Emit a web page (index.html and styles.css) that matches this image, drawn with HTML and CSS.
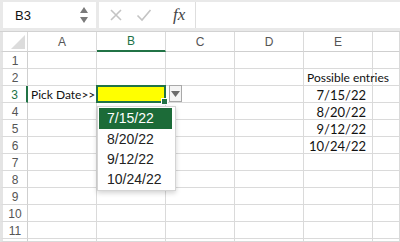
FILE: index.html
```html
<!DOCTYPE html>
<html lang="en">
<head>
    <meta charset="UTF-8">
    <meta name="viewport" content="width=device-width, initial-scale=1.0">
    <title>Pick Date</title>
    <link rel="stylesheet" href="styles.css">
</head>
<body>

    <div class="toolbar">
        <div class="namebox">
            <span class="name">B3</span>
            <svg class="spin" width="10" height="20" viewBox="0 0 10 20">
                <path d="M1 8 L5 2 L9 8 Z" fill="#7a7a7a"/>
                <path d="M1 12 L5 18 L9 12 Z" fill="#7a7a7a"/>
            </svg>
        </div>
        <div class="fx-area">
            <svg class="tool-icon" width="14" height="14" viewBox="0 0 14 14">
                <path d="M2 2 L12 12 M12 2 L2 12" stroke="#c4c4c4" stroke-width="1.6" fill="none"/>
            </svg>
            <svg class="tool-icon" width="16" height="14" viewBox="0 0 16 14">
                <path d="M1.5 7.5 L6 12 L14.5 2" stroke="#c4c4c4" stroke-width="1.6" fill="none"/>
            </svg>
            <span class="fx">fx</span>
        </div>
        <div class="formula"></div>
    </div>

    <div class="sheet">
        <!-- header row -->
        <div class="corner"><svg width="14" height="14" viewBox="0 0 14 14"><path d="M14 0 L14 14 L0 14 Z" fill="#dcdcdc"/></svg></div>
        <div class="colhead">A</div>
        <div class="colhead active">B</div>
        <div class="colhead">C</div>
        <div class="colhead">D</div>
        <div class="colhead">E</div>
        <div class="colhead"></div>

        <div class="rowhead">1</div>
        <div class="cell"></div><div class="cell"></div><div class="cell"></div><div class="cell"></div><div class="cell"></div><div class="cell"></div>

        <div class="rowhead">2</div>
        <div class="cell"></div><div class="cell"></div><div class="cell"></div><div class="cell"></div><div class="cell text">Possible entries</div><div class="cell"></div>

        <div class="rowhead active">3</div>
        <div class="cell text">Pick Date&gt;&gt;</div>
        <div class="cell selected">
            <span class="fill-handle"></span>
            <span class="drop-btn">
                <svg width="9" height="6" viewBox="0 0 9 6"><path d="M0 0 L9 0 L4.5 6 Z" fill="#6b6b6b"/></svg>
            </span>
            <ul class="drop-list">
                <li class="picked">7/15/22</li>
                <li>8/20/22</li>
                <li>9/12/22</li>
                <li>10/24/22</li>
            </ul>
        </div>
        <div class="cell"></div><div class="cell"></div><div class="cell num">7/15/22</div><div class="cell"></div>

        <div class="rowhead">4</div>
        <div class="cell"></div><div class="cell"></div><div class="cell"></div><div class="cell"></div><div class="cell num">8/20/22</div><div class="cell"></div>

        <div class="rowhead">5</div>
        <div class="cell"></div><div class="cell"></div><div class="cell"></div><div class="cell"></div><div class="cell num">9/12/22</div><div class="cell"></div>

        <div class="rowhead">6</div>
        <div class="cell"></div><div class="cell"></div><div class="cell"></div><div class="cell"></div><div class="cell num">10/24/22</div><div class="cell"></div>

        <div class="rowhead">7</div>
        <div class="cell"></div><div class="cell"></div><div class="cell"></div><div class="cell"></div><div class="cell"></div><div class="cell"></div>

        <div class="rowhead">8</div>
        <div class="cell"></div><div class="cell"></div><div class="cell"></div><div class="cell"></div><div class="cell"></div><div class="cell"></div>

        <div class="rowhead">9</div>
        <div class="cell"></div><div class="cell"></div><div class="cell"></div><div class="cell"></div><div class="cell"></div><div class="cell"></div>

        <div class="rowhead">10</div>
        <div class="cell"></div><div class="cell"></div><div class="cell"></div><div class="cell"></div><div class="cell"></div><div class="cell"></div>

        <div class="rowhead">11</div>
        <div class="cell"></div><div class="cell"></div><div class="cell"></div><div class="cell"></div><div class="cell"></div><div class="cell"></div>

        <!-- partly visible row 12 -->
        <div class="rowhead"></div>
        <div class="cell"></div><div class="cell"></div><div class="cell"></div><div class="cell"></div><div class="cell"></div><div class="cell"></div>
    </div>

</body>
</html>
```

FILE: styles.css
```css
body {
    margin: 0;
    width: 400px;
    height: 242px;
    overflow: hidden;
    background: #fff;
    font-family: "Liberation Sans", Arial, sans-serif;
    color: #222;
}

/* formula bar */
.toolbar {
    display: flex;
    height: 32px;
    box-sizing: border-box;
    padding: 2px 0 3px 3px;
    background: #e9e9e9;
    border-bottom: 1px solid #d2d2d2;
    gap: 3px;
}
.namebox {
    width: 93px;
    background: #fff;
    display: flex;
    align-items: center;
    justify-content: space-between;
    padding: 0 7px 0 12px;
    box-sizing: border-box;
}
.name {
    font-size: 13px;
    color: #111;
}
.fx-area {
    width: 97px;
    background: #fff;
    display: flex;
    align-items: center;
    padding-left: 10px;
    box-sizing: border-box;
    gap: 13px;
    border-right: 1px solid #dedede;
}
.fx {
    font-family: "Liberation Serif", "Times New Roman", serif;
    font-style: italic;
    font-size: 17px;
    color: #444;
    margin-left: 8px;
}
.formula {
    flex: 1;
    background: #fff;
    margin-left: -3px;
}

/* grid */
.sheet {
    display: grid;
    grid-template-columns: 28px repeat(5, 69px) 27px;
    grid-template-rows: 20px repeat(11, 17px) 3px;
    width: 400px;
    overflow: hidden;
    font-family: Lato, "Liberation Sans", sans-serif;
}
.corner, .colhead, .rowhead, .cell {
    box-sizing: border-box;
    border-right: 1px solid #dadada;
    border-bottom: 1px solid #dadada;
}
.corner {
    display: flex;
    align-items: flex-end;
    justify-content: flex-end;
    padding: 0 2px 2px 0;
    border-left: 3px solid #e4e4e4;
    border-bottom-color: #cfcfcf;
}
.colhead {
    display: flex;
    align-items: center;
    justify-content: center;
    font-family: "Liberation Sans", Arial, sans-serif;
    font-size: 12px;
    color: #555;
    border-bottom-color: #cfcfcf;
}
.colhead.active {
    color: #217346;
    border-bottom: 2px solid #217346;
}
.rowhead {
    display: flex;
    align-items: center;
    justify-content: center;
    font-family: "Liberation Sans", Arial, sans-serif;
    font-size: 12px;
    color: #555;
    border-left: 3px solid #e4e4e4;
    border-right-color: #cfcfcf;
    padding-top: 1px;
}
.rowhead.active {
    color: #217346;
    border-right: 2px solid #217346;
}
.cell {
    font-size: 12px;
    line-height: 16px;
    padding-top: 1px;
    color: #111;
    white-space: nowrap;
    position: relative;
}
.cell.text {
    padding-left: 3px;
    overflow: visible;
    z-index: 1;
}
.cell.num {
    font-size: 13px;
    text-align: right;
    padding-right: 6px;
}

/* selected cell with validation list */
.cell.selected {
    background: #ffff00;
    z-index: 3;
}
.cell.selected::after {
    content: "";
    position: absolute;
    top: -1px;
    left: -1px;
    right: -1px;
    bottom: -1px;
    border: 2px solid #217346;
}
.fill-handle {
    position: absolute;
    right: -3px;
    bottom: -3px;
    width: 5px;
    height: 5px;
    background: #217346;
    border: 1px solid #fff;
    z-index: 2;
}
.drop-btn {
    position: absolute;
    left: 72px;
    top: -1px;
    width: 13px;
    height: 17px;
    box-sizing: border-box;
    border: 1px solid #a9a9a9;
    background: #f4f4f4;
    display: flex;
    align-items: center;
    justify-content: center;
}
.drop-list {
    position: absolute;
    left: 0;
    top: 20px;
    width: 79px;
    margin: 0;
    padding: 1px 3px 1px 1px;
    list-style: none;
    background: #fff;
    border: 1px solid #d4d4d4;
    box-shadow: 0 2px 5px rgba(0, 0, 0, 0.18);
    box-sizing: border-box;
    font-family: "Liberation Sans", Arial, sans-serif;
    font-size: 14px;
    color: #222;
    z-index: 5;
}
.drop-list li {
    height: 20px;
    line-height: 20px;
    padding-left: 8px;
}
.drop-list li.picked {
    height: 21px;
    line-height: 21px;
    background: #1c6b38;
    color: #fff;
}
```
